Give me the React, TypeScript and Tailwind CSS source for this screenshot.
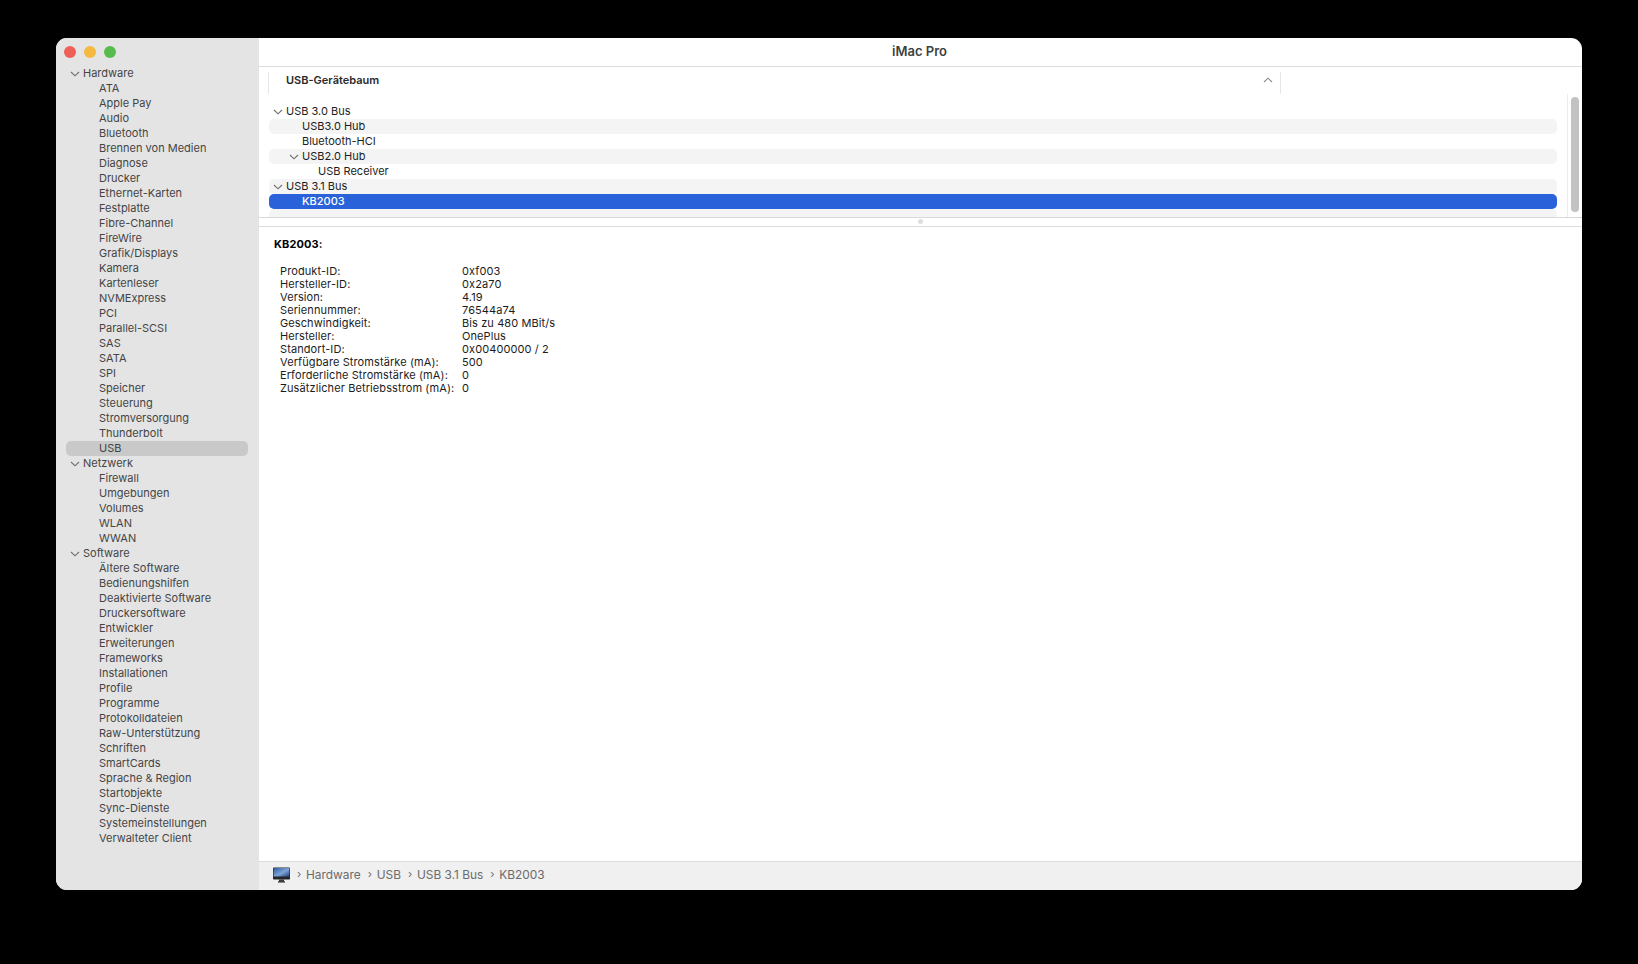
import React from "react";

const font = { fontFamily: 'Inter, "Liberation Sans", sans-serif' };

const groups: [string, string[]][] = [
  ["Hardware", ["ATA", "Apple Pay", "Audio", "Bluetooth", "Brennen von Medien", "Diagnose", "Drucker", "Ethernet-Karten", "Festplatte", "Fibre-Channel", "FireWire", "Grafik/Displays", "Kamera", "Kartenleser", "NVMExpress", "PCI", "Parallel-SCSI", "SAS", "SATA", "SPI", "Speicher", "Steuerung", "Stromversorgung", "Thunderbolt", "USB"]],
  ["Netzwerk", ["Firewall", "Umgebungen", "Volumes", "WLAN", "WWAN"]],
  ["Software", ["Ältere Software", "Bedienungshilfen", "Deaktivierte Software", "Druckersoftware", "Entwickler", "Erweiterungen", "Frameworks", "Installationen", "Profile", "Programme", "Protokolldateien", "Raw-Unterstützung", "Schriften", "SmartCards", "Sprache & Region", "Startobjekte", "Sync-Dienste", "Systemeinstellungen", "Verwalteter Client"]],
];

const tree: { label: string; indent: number; chevron?: boolean; stripe?: boolean; selected?: boolean }[] = [
  { label: "USB 3.0 Bus", indent: 0, chevron: true },
  { label: "USB3.0 Hub", indent: 1, stripe: true },
  { label: "Bluetooth-HCI", indent: 1 },
  { label: "USB2.0 Hub", indent: 1, chevron: true, stripe: true },
  { label: "USB Receiver", indent: 2 },
  { label: "USB 3.1 Bus", indent: 0, chevron: true, stripe: true },
  { label: "KB2003", indent: 1, selected: true },
];

const details: [string, string][] = [
  ["Produkt-ID:", "0xf003"],
  ["Hersteller-ID:", "0x2a70"],
  ["Version:", "4.19"],
  ["Seriennummer:", "76544a74"],
  ["Geschwindigkeit:", "Bis zu 480 MBit/s"],
  ["Hersteller:", "OnePlus"],
  ["Standort-ID:", "0x00400000 / 2"],
  ["Verfügbare Stromstärke (mA):", "500"],
  ["Erforderliche Stromstärke (mA):", "0"],
  ["Zusätzlicher Betriebsstrom (mA):", "0"],
];

function Chevron({ color = "#6f6f6f", className = "", style }: { color?: string; className?: string; style?: React.CSSProperties }) {
  return (
    <svg width="10" height="6" viewBox="0 0 10 6" fill="none" className={className} style={style}>
      <path d="M1 1l4 3.8L9 1" stroke={color} strokeWidth="1.1" />
    </svg>
  );
}

function Crumb({ label }: { label: string }) {
  return (
    <div className="flex items-center">
      <span className="text-[11px] text-[#6e6e6e] w-[9px] leading-none">›</span>
      <span>{label}</span>
    </div>
  );
}

export default function App() {
  return (
    <div className="min-h-[964px] bg-black pt-[38px] px-[56px] overflow-hidden" style={font}>
      <div className="w-[1526px] h-[852px] rounded-[11px] overflow-hidden flex bg-white text-[11px]">
        <aside className="w-[203px] shrink-0 bg-[#e4e4e4] text-[#444444] flex flex-col">
          <div className="h-[28px] flex items-center gap-[8px] pl-[8px] pb-[1px]">
            <span className="w-[12px] h-[12px] rounded-full bg-[#ee5f57]" />
            <span className="w-[12px] h-[12px] rounded-full bg-[#f5b941]" />
            <span className="w-[12px] h-[12px] rounded-full bg-[#56bc4c]" />
          </div>
          {groups.map(([name, items]) => (
            <div key={name}>
              <div className="h-[15px] flex items-center pl-[14px]">
                <Chevron className="w-[10px]" />
                <span className="ml-[3px]">{name}</span>
              </div>
              {items.map((it) => (
                <div
                  key={it}
                  className={`h-[15px] flex items-center ml-[10px] mr-[11px] pl-[33px] rounded-[5px] ${it === "USB" ? "bg-[#c9c9c9]" : ""}`}
                >
                  {it}
                </div>
              ))}
            </div>
          ))}
        </aside>
        <main className="flex-1 flex flex-col min-w-0 text-[#1c1c1c]">
          <div className="h-[28px] shrink-0 flex items-center justify-center pr-[2px] font-semibold text-[13px] text-[#3f3f3f] border-b border-[#dcdcdc] box-content">
            iMac Pro
          </div>
          <div className="h-[27px] shrink-0 flex items-start pt-[5px] pl-[9px]">
            <div className="w-[1013px] h-[22px] border-x border-[#e6e6e6] flex items-center pl-[17px] pr-[7px] pb-[6px] justify-between">
              <span className="font-semibold text-[#2a2a2a]">USB-Gerätebaum</span>
              <Chevron color="#8c8c8c" className="rotate-180" />
            </div>
          </div>
          <div className="h-[123px] shrink-0 flex border-b border-[#d8d8d8] box-content">
            <div className="flex-1 pl-[10px] pr-[10px] pt-[10px] overflow-hidden">
              {tree.map((r) => (
                <div
                  key={r.label}
                  className={`h-[15px] flex items-center rounded-[5px] relative ${r.stripe ? "bg-[#f4f4f4]" : ""} ${r.selected ? "bg-[#2a62d9] text-white font-medium" : ""}`}
                  style={{ paddingLeft: 17 + r.indent * 16 }}
                >
                  {r.chevron && (
                    <Chevron className="absolute" color="#6f6f6f" style={{ left: 4 + r.indent * 16 }} />
                  )}
                  {r.label}
                </div>
              ))}
              <div className="h-[8px] rounded-t-[5px] bg-[#f4f4f4]" />
            </div>
            <div className="w-[15px] shrink-0 border-l border-[#ececec] pl-[3px] pt-[3px]">
              <div className="w-[8px] h-[115px] rounded-full bg-[#c2c2c2]" />
            </div>
          </div>
          <div className="h-[8px] shrink-0 flex items-center justify-center border-b border-[#dcdcdc] box-content">
            <span className="w-[5px] h-[5px] rounded-full bg-[#dedede] -translate-y-[1px]" />
          </div>
          <div className="flex-1 pl-[15px] pt-[10px] min-h-0 tracking-[0.1px]">
            <div className="font-bold leading-[14px] text-black">KB2003:</div>
            <div className="mt-[14px] pl-[6px] leading-[13px] grid grid-cols-[182px_1fr]">
              {details.map(([k, v]) => (
                <React.Fragment key={k}>
                  <div>{k}</div>
                  <div>{v}</div>
                </React.Fragment>
              ))}
            </div>
          </div>
          <div className="h-[29px] shrink-0 bg-[#f0f0f0] border-t border-[#dcdcdc] box-border flex items-center pl-[14px] pb-[2px] text-[11.9px] text-[#6b6b6b]">
            <svg width="17" height="16" viewBox="0 0 17 16" className="mr-[7px]">
              <defs>
                <linearGradient id="scr" x1="0" y1="0" x2="1" y2="1">
                  <stop offset="0" stopColor="#2d5a9e" />
                  <stop offset="0.55" stopColor="#7ea4d8" />
                  <stop offset="1" stopColor="#1f4478" />
                </linearGradient>
              </defs>
              <rect x="0" y="0.5" width="17" height="12" rx="0.8" fill="#26262a" />
              <rect x="0.6" y="1" width="15.8" height="8.5" fill="url(#scr)" />
              <rect x="6" y="12.5" width="5" height="2" fill="#3a3a3c" />
              <rect x="5" y="14.3" width="7" height="1.2" fill="#1f1f21" />
            </svg>
            <div className="flex gap-[7px]">
              <Crumb label="Hardware" />
              <Crumb label="USB" />
              <Crumb label="USB 3.1 Bus" />
              <Crumb label="KB2003" />
            </div>
          </div>
        </main>
      </div>
    </div>
  );
}
